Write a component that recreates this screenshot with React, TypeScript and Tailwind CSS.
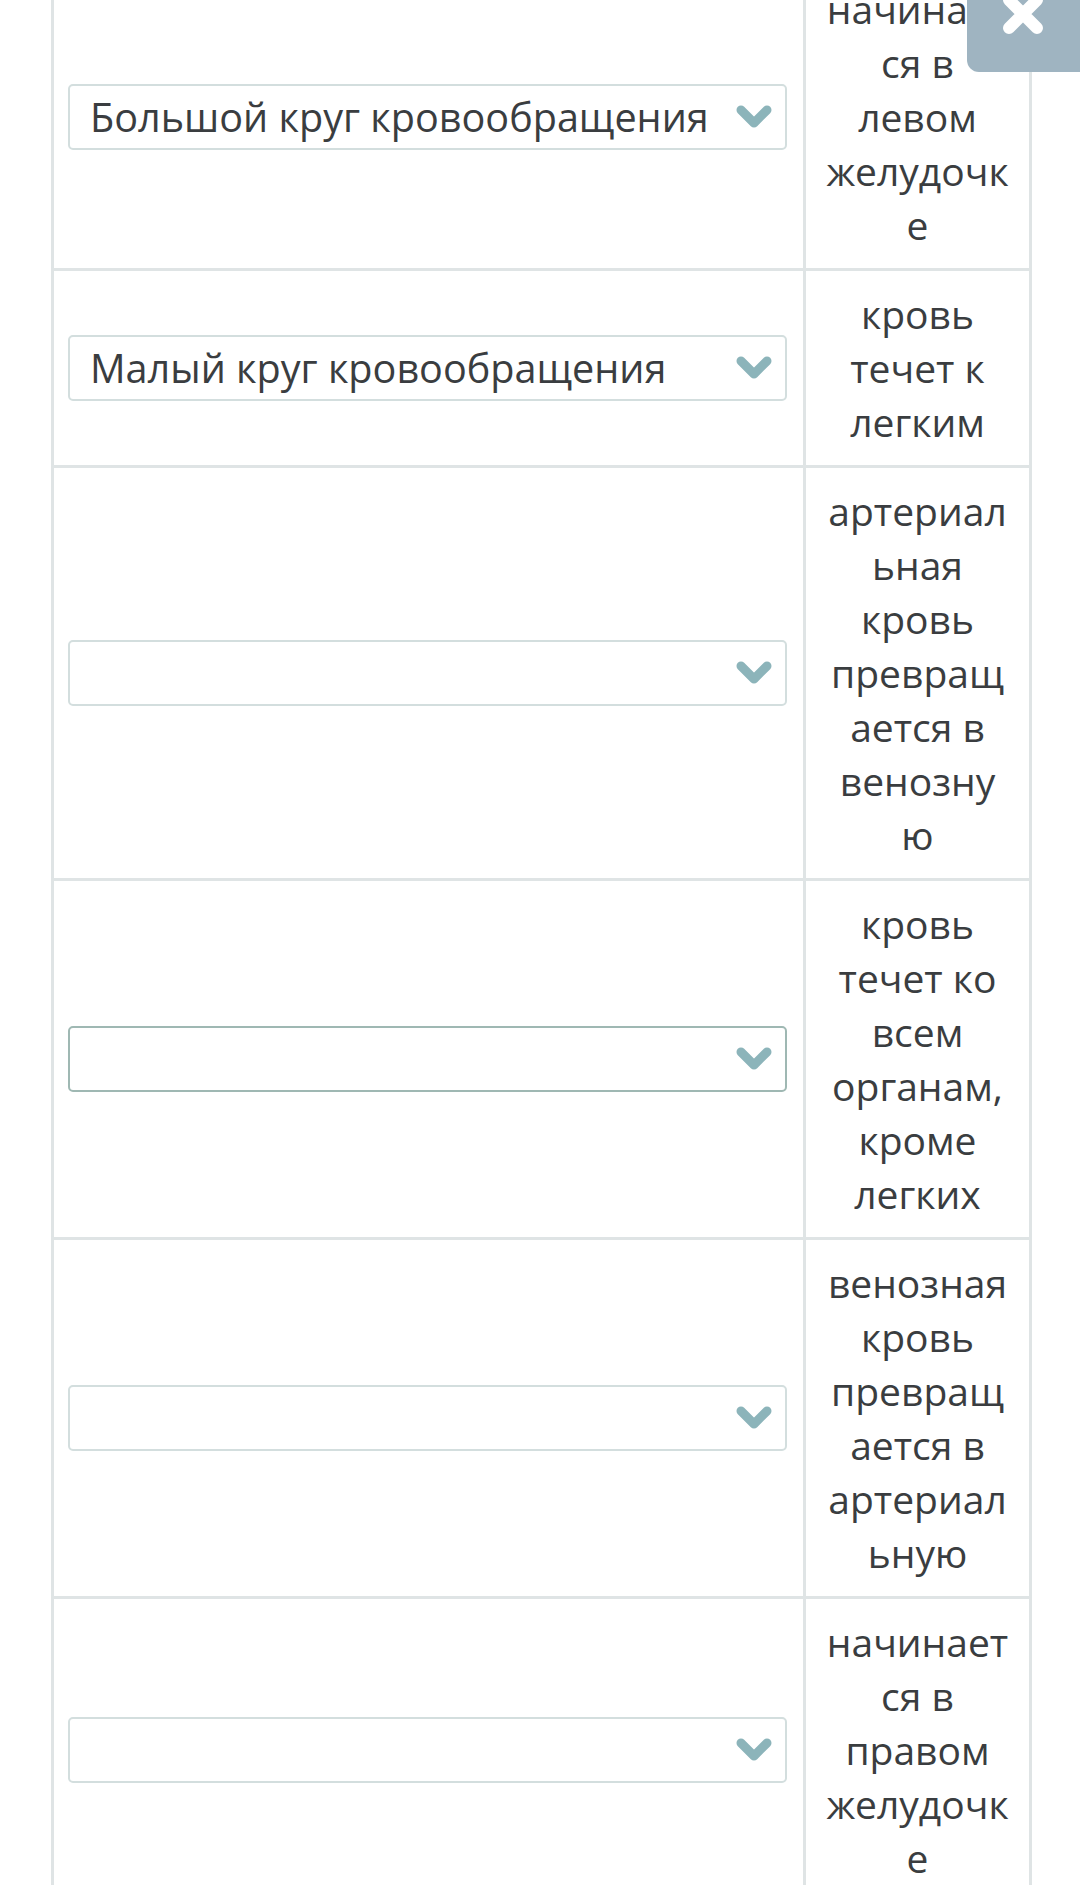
import React from 'react';

type Row = {
  value: string;
  focused?: boolean;
  lines: string[];
};

const rows: Row[] = [
  { value: 'Большой круг кровообращения', lines: ['начинает', 'ся в', 'левом', 'желудочк', 'е'] },
  { value: 'Малый круг кровообращения', lines: ['кровь', 'течет к', 'легким'] },
  { value: '', lines: ['артериал', 'ьная', 'кровь', 'превращ', 'ается в', 'венозну', 'ю'] },
  { value: '', focused: true, lines: ['кровь', 'течет ко', 'всем', 'органам,', 'кроме', 'легких'] },
  { value: '', lines: ['венозная', 'кровь', 'превращ', 'ается в', 'артериал', 'ьную'] },
  { value: '', lines: ['начинает', 'ся в', 'правом', 'желудочк', 'е'] },
];

function Chevron() {
  return (
    <svg width="36" height="26" viewBox="0 0 36 26" className="shrink-0">
      <path d="M5 6 L18 19 L31 6" fill="none" stroke="#8cb4ba" strokeWidth="9" strokeLinecap="round" strokeLinejoin="round" />
    </svg>
  );
}

function Select({ value, focused }: { value: string; focused?: boolean }) {
  return (
    <div
      className={`flex h-[66px] w-full items-center justify-between rounded-[5px] border-2 bg-white pl-[20px] pr-[13px] ${
        focused ? 'border-[#9fb8b3]' : 'border-[#d3dede]'
      }`}
    >
      <span className="whitespace-nowrap text-[39.6px] leading-[54px] text-[#3a3d40]">{value}</span>
      <Chevron />
    </div>
  );
}

export default function App() {
  return (
    <div className="relative h-[1885px] w-[1080px] overflow-hidden bg-white font-['Open_Sans','Noto_Sans',sans-serif]">
      <div className="-mt-[34px] ml-[51px] w-[981px] border-x-[3px] border-[#dfe4e5]">
        {rows.map((row, i) => (
          <div key={i} className="flex border-b-[3px] border-[#dfe4e5]">
            <div className="flex flex-1 items-center pl-[14px] pr-[16px]">
              <Select value={row.value} focused={row.focused} />
            </div>
            <div className="w-[226px] border-l-[3px] border-[#dfe4e5] py-[16px] text-center text-[39px] leading-[54px] text-[#3a3d40]">
              {row.lines.map((l, j) => (
                <div key={j} className="whitespace-nowrap">{l}</div>
              ))}
            </div>
          </div>
        ))}
      </div>

      {/* close button overlapping top right */}
      <div className="absolute right-0 top-0 h-[72px] w-[113px] rounded-bl-[12px] bg-[#9fb4c1]">
        <svg width="44" height="44" viewBox="0 0 44 44" className="absolute left-[34px] -top-[8px]">
          <path d="M8 8 L36 36 M36 8 L8 36" stroke="#ffffff" strokeWidth="12" strokeLinecap="round" />
        </svg>
      </div>
    </div>
  );
}
